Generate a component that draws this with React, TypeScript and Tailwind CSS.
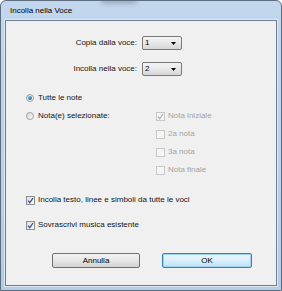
import React from "react";

const font = { fontFamily: '"Liberation Sans", Arial, sans-serif' };

function Select({ value }: { value: string }) {
  return (
    <div className="ml-[5px] flex h-[14px] w-[40px] items-center justify-between rounded-[2px] border border-[#7a7a7a] bg-gradient-to-b from-[#f4f4f4] via-[#e8e8e8] to-[#d6d6d6] pl-[2px] pr-[5px]">
      <span className="text-[8px] leading-none text-black">{value}</span>
      <svg width="5" height="3" viewBox="0 0 5 3">
        <path d="M0 0h5L2.5 3z" fill="#000" />
      </svg>
    </div>
  );
}

function Radio({ checked }: { checked?: boolean }) {
  return (
    <div className="flex h-[8px] w-[8px] items-center justify-center rounded-full border border-[#9aa3ad] bg-gradient-to-br from-[#d8d8d8] to-[#fbfbfb]">
      {checked && (
        <div className="h-[4px] w-[4px] rounded-full bg-gradient-to-br from-[#6cc8ee] to-[#1d5d98]" />
      )}
    </div>
  );
}

function Check({ checked, disabled }: { checked?: boolean; disabled?: boolean }) {
  return (
    <div
      className={
        disabled
          ? "flex h-[9px] w-[9px] items-center justify-center border border-[#c8c8c8] bg-[#f6f6f6]"
          : "flex h-[9px] w-[9px] items-center justify-center border border-[#8e8f8f] bg-gradient-to-br from-[#dedede] to-[#fafafa]"
      }
    >
      {checked && (
        <svg width="7" height="7" viewBox="0 0 7 7">
          <path
            d="M1 3.6l1.8 2L6 1"
            fill="none"
            stroke={disabled ? "#b4b4b4" : "#3d4f8a"}
            strokeWidth="1.3"
          />
        </svg>
      )}
    </div>
  );
}

export default function App() {
  return (
    <div style={font} className="h-[291px] w-[282px] bg-white">
      <div className="relative flex h-full w-full flex-col overflow-hidden rounded-t-[6px] border border-[#5c6d80] bg-gradient-to-b from-[#c2d6ed] via-[#bcd2eb] to-[#b4cce6] px-[4px] pb-[4px]">
        <div className="pointer-events-none absolute left-[100px] top-[-4px] h-[7px] w-[36px] rounded-full bg-[#7f8a96] opacity-50 blur-[2px]" />
        <div className="flex h-[19px] items-center pl-[5px] text-[8px] text-black">
          Incolla nella Voce
        </div>
        <div className="flex flex-1 flex-col border border-[#6e7e90] bg-[#f0f0f0] text-[8px] text-[#141414] shadow-[0_0_0_1px_#dbe8f6]">
          <div className="mt-[15px] flex h-[14px] items-center">
            <div className="w-[131px] text-right">Copia dalla voce:</div>
            <Select value="1" />
          </div>
          <div className="mt-[12px] flex h-[14px] items-center">
            <div className="w-[131px] text-right">Incolla nella voce:</div>
            <Select value="2" />
          </div>

          <div className="mt-[16px] flex h-[12px] items-center gap-[4px] pl-[20px]">
            <Radio checked />
            <span>Tutte le note</span>
          </div>
          <div className="mt-[6px] flex">
            <div className="flex h-[12px] w-[150px] items-center gap-[4px] pl-[20px]">
              <Radio />
              <span>Nota(e) selezionate:</span>
            </div>
            <div className="flex flex-col gap-[6px] text-[#a3a3a3]">
              <div className="flex h-[12px] items-center gap-[3px]">
                <Check checked disabled />
                <span>Nota iniziale</span>
              </div>
              <div className="flex h-[12px] items-center gap-[3px]">
                <Check disabled />
                <span>2a nota</span>
              </div>
              <div className="flex h-[12px] items-center gap-[3px]">
                <Check disabled />
                <span>3a nota</span>
              </div>
              <div className="flex h-[12px] items-center gap-[3px]">
                <Check disabled />
                <span>Nota finale</span>
              </div>
            </div>
          </div>

          <div className="mt-[18px] flex h-[12px] items-center gap-[3px] pl-[20px]">
            <Check checked />
            <span>Incolla testo, linee e simboli da tutte le voci</span>
          </div>
          <div className="mt-[13px] flex h-[12px] items-center gap-[3px] pl-[20px]">
            <Check checked />
            <span>Sovrascrivi musica esistente</span>
          </div>

          <div className="mt-[22px] flex gap-[22px] pl-[46px]">
            <button className="flex h-[15px] w-[88px] items-center justify-center rounded-[2px] border border-[#707070] bg-gradient-to-b from-[#f3f3f3] via-[#e6e6e6] to-[#d2d2d2] text-[8px] text-black">
              Annulla
            </button>
            <button className="flex h-[15px] w-[90px] items-center justify-center rounded-[2px] border border-[#3c7fb1] bg-gradient-to-b from-[#eaf6fd] via-[#d9eefa] to-[#bfe2f6] text-[8px] text-black shadow-[inset_0_0_0_1px_#9fd3f2]">
              OK
            </button>
          </div>
        </div>
      </div>
    </div>
  );
}
